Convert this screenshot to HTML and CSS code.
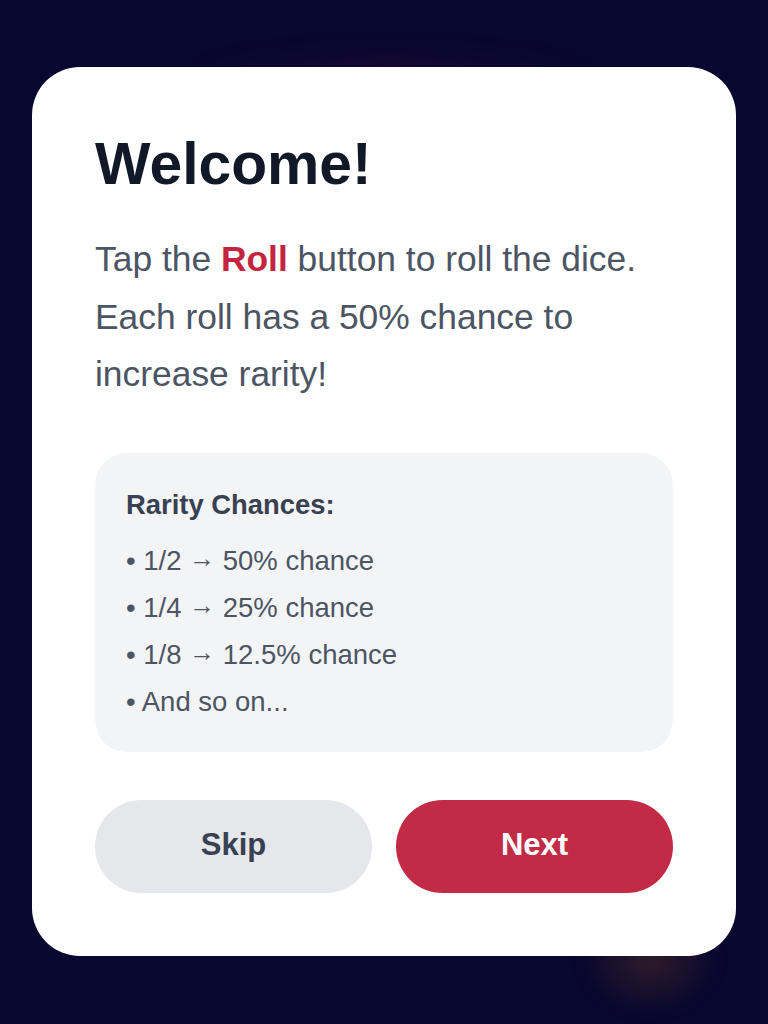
FILE: index.html
```html
<!DOCTYPE html>
<html lang="en">
<head>
<meta charset="utf-8">
<title>Welcome</title>
<link rel="stylesheet" href="styles.css">
</head>
<body>
  <div class="glow glow-orange"></div>
  <div class="glow glow-top"></div>
  <main class="card">
    <h1 class="title">Welcome!</h1>
    <p class="intro">Tap the <strong class="accent">Roll</strong> button to roll the dice. Each roll has a 50% chance to increase rarity!</p>
    <section class="chances">
      <h2 class="chances-title">Rarity Chances:</h2>
      <ul class="chances-list">
        <li>• 1/2 <span class="arrow">→</span> 50% chance</li>
        <li>• 1/4 <span class="arrow">→</span> 25% chance</li>
        <li>• 1/8 <span class="arrow">→</span> 12.5% chance</li>
        <li>• And so on...</li>
      </ul>
    </section>
    <div class="actions">
      <button class="btn btn-skip">Skip</button>
      <button class="btn btn-next">Next</button>
    </div>
  </main>
</body>
</html>
```
FILE: styles.css
```css
* { box-sizing: border-box; }

html, body {
  margin: 0;
  padding: 0;
}

body {
  width: 768px;
  height: 1024px;
  background: #08072f;
  font-family: "Liberation Sans", Arial, sans-serif;
  padding: 67px 32px 0;
  position: relative;
  overflow: hidden;
}

.glow {
  position: absolute;
  border-radius: 50%;
  pointer-events: none;
}

.glow-orange {
  left: 580px;
  top: 905px;
  width: 140px;
  height: 110px;
  background: radial-gradient(closest-side, rgba(140, 80, 30, 0.3), rgba(140, 80, 30, 0));
  filter: blur(8px);
}

.glow-top {
  left: 180px;
  top: 40px;
  width: 420px;
  height: 60px;
  background: radial-gradient(closest-side, rgba(120, 20, 60, 0.12), rgba(120, 20, 60, 0));
  filter: blur(8px);
}

.card {
  position: relative;
  width: 704px;
  background: #ffffff;
  border-radius: 48px;
  padding: 62px 63px 63px;
}

.title {
  margin: 0;
  font-size: 58.8px;
  line-height: 70px;
  font-weight: 700;
  color: #111827;
}

.intro {
  margin: 32px 0 0;
  font-size: 35.4px;
  line-height: 57.5px;
  color: #4b5563;
}

.accent {
  color: #c4243f;
  font-weight: 700;
}

.chances {
  margin-top: 49.5px;
  background: #f3f4f6;
  border-radius: 32px;
  padding: 32px 31px 27px;
}

.chances-title {
  margin: 0;
  font-size: 27.4px;
  line-height: 40px;
  font-weight: 700;
  color: #374151;
}

.chances-list {
  list-style: none;
  margin: 12px 0 0;
  padding: 0;
  font-size: 27.5px;
  line-height: 47px;
  color: #4b5563;
}

.chances-list li {
  height: 47px;
}

.arrow {
  vertical-align: 3px;
  line-height: 1;
  font-size: 26px;
}

.actions {
  margin-top: 48px;
  display: grid;
  grid-template-columns: 1fr 1fr;
  gap: 24px;
}

.btn {
  height: 93px;
  border: none;
  border-radius: 999px;
  padding: 0 0 3px;
  font-family: "Liberation Sans", Arial, sans-serif;
  font-size: 31px;
  font-weight: 700;
  cursor: pointer;
}

.btn-skip {
  background: #e5e7eb;
  color: #374151;
}

.btn-next {
  background: #c22b45;
  color: #ffffff;
}
```
